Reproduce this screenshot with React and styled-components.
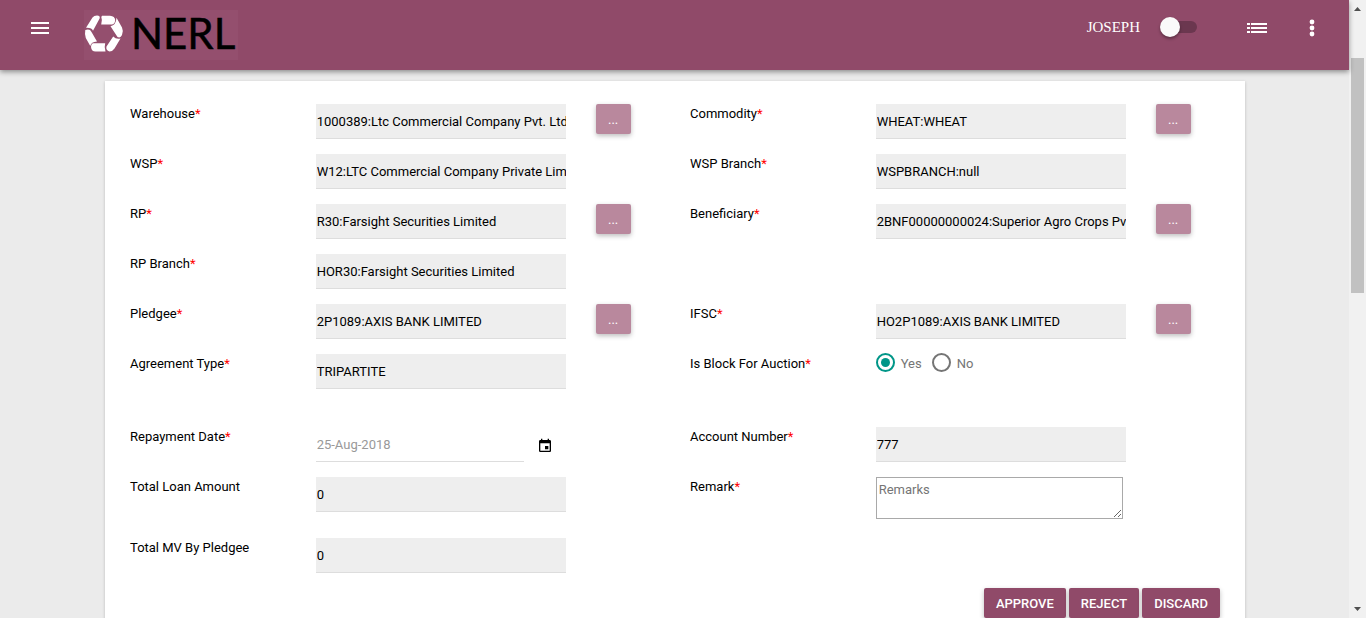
import React from "react";
import styled, { createGlobalStyle } from "styled-components";
import { MdEvent } from "react-icons/md";

const plum = "#904a69";
const teal = "#009688";

const GlobalStyle = createGlobalStyle`
  *, *::before, *::after { box-sizing: border-box; }
  body {
    margin: 0;
    background: #ebebeb;
    color: #000;
    font: 13px/20px Roboto, "Liberation Sans", sans-serif;
  }
  button, input, textarea { font: inherit; }
`;

const Shell = styled.div`
  display: flex;
  height: 100vh;
  overflow: hidden;
`;

const Page = styled.div`
  flex: 1;
  min-width: 0;
  display: flex;
  flex-direction: column;
`;

const Header = styled.header`
  position: relative;
  z-index: 1;
  flex: none;
  display: flex;
  align-items: flex-start;
  height: 70px;
  padding: 0 21px 0 24px;
  background: ${plum};
  box-shadow: 0 2px 5px rgba(0, 0, 0, 0.4);
`;

const IconButton = styled.button`
  display: grid;
  place-items: center;
  width: 32px;
  height: 56px;
  padding: 0;
  border: 0;
  background: none;
  color: #fff;
`;

const Logo = styled.a`
  display: flex;
  margin: 10px auto 0 28px;
  background: #944f6e;
`;

const Tools = styled.div`
  display: flex;
  align-items: center;
  height: 56px;
`;

const Menus = styled.div`
  display: flex;
  gap: 23px;
`;

const User = styled.span`
  margin: 0 20px 2px 0;
  color: #fff;
  font: 15px/20px "Liberation Serif", serif;
`;

const Toggle = styled.input`
  appearance: none;
  position: relative;
  width: 38px;
  height: 20px;
  margin: 0 43px 2px 0;
  &::before {
    content: "";
    position: absolute;
    inset: 4px 1px 4px 3px;
    border-radius: 6px;
    background: #6b374f;
  }
  &::after {
    content: "";
    position: absolute;
    top: 0;
    left: 0;
    width: 20px;
    height: 20px;
    border-radius: 50%;
    background: #fafafa;
    box-shadow: 0 2px 3px rgba(0, 0, 0, 0.35);
  }
`;

const Content = styled.main`
  flex: 1;
  display: flex;
  flex-direction: column;
  padding: 11px 104px 0 105px;
`;

const Card = styled.form`
  flex: 1 0 auto;
  padding: 23px 0 0;
  background: #fff;
  box-shadow: 0 1px 3px rgba(0, 0, 0, 0.2);
`;

const Fields = styled.div`
  display: grid;
  grid-template-columns: repeat(2, 2fr 3fr 1fr);
  align-items: start;
  row-gap: 15px;
  margin: 0 -4px 0 24px;
`;

const Label = styled.label`
  grid-column: ${(p) => (p.$side === "right" ? 4 : 1)};
  padding-left: 1px;
`;

const Required = styled.span`
  color: #f00;
`;

const TextField = styled.input`
  display: block;
  width: ${(p) => (p.$dated ? "208px" : "250px")};
  height: 35px;
  margin: 0;
  padding: 0 0 0 1px;
  border: 0;
  border-bottom: 1px solid #ddd;
  border-radius: 0;
  outline: 0;
  background: ${(p) => (p.$dated ? "transparent" : "#eee")};
  color: ${(p) => (p.$dated ? "#999" : "#000")};
`;

const DateBox = styled.div`
  display: flex;
  align-items: center;
  gap: 13px;
`;

const DateButton = styled.button`
  display: flex;
  padding: 3px 0 0;
  border: 0;
  background: none;
  color: #000;
`;

const LookupButton = styled.button`
  width: 35px;
  height: 30px;
  padding: 2px 0 0;
  border: 0;
  border-radius: 2px;
  background: #b9889d;
  color: #fff;
  box-shadow: 0 2px 5px rgba(0, 0, 0, 0.26);
`;

const RadioGroup = styled.div`
  display: flex;
  align-items: flex-start;
  gap: 10px;
  min-height: 58px;
`;

const RadioLabel = styled.label`
  display: flex;
  align-items: flex-start;
  gap: 6px;
  color: #757575;
`;

const Radio = styled.input`
  appearance: none;
  display: grid;
  place-items: center;
  width: 19px;
  height: 19px;
  margin: -1px 0 0;
  border: 2px solid #757575;
  border-radius: 50%;
  &:checked { border-color: ${teal}; }
  &:checked::before {
    content: "";
    width: 9px;
    height: 9px;
    border-radius: 50%;
    background: ${teal};
  }
`;

const Remarks = styled.textarea`
  display: block;
  width: 247px;
  height: 42px;
  margin: 0 0 4px;
  padding: 2px;
  border: 1px solid #a9a9a9;
  outline: 0;
  &::placeholder { color: #757575; }
`;

const Actions = styled.div`
  display: flex;
  justify-content: flex-end;
  gap: 3px;
  padding: 15px 25px;
`;

const ActionButton = styled.button`
  height: 30px;
  padding: 2px 12px 0;
  border: 0;
  border-radius: 2px;
  background: ${plum};
  color: #fff;
  font-weight: 500;
  box-shadow: 0 2px 5px rgba(0, 0, 0, 0.26);
`;

const ScrollRail = styled.div`
  flex: none;
  display: flex;
  flex-direction: column;
  align-items: center;
  width: 17px;
  background: #f1f1f1;
`;

const ScrollThumb = styled.div`
  width: 13px;
  height: 38vh;
  margin: 41px 0 auto;
  background: #c1c1c1;
`;

const fields = [
  { id: "warehouse", label: "Warehouse", value: "1000389:Ltc Commercial Company Pvt. Ltd", lookup: true },
  { id: "commodity", label: "Commodity", value: "WHEAT:WHEAT", lookup: true, side: "right" },
  { id: "wsp", label: "WSP", value: "W12:LTC Commercial Company Private Limited" },
  { id: "wspBranch", label: "WSP Branch", value: "WSPBRANCH:null", side: "right" },
  { id: "rp", label: "RP", value: "R30:Farsight Securities Limited", lookup: true },
  { id: "beneficiary", label: "Beneficiary", value: "2BNF00000000024:Superior Agro Crops Pvt Ltd", lookup: true, side: "right" },
  { id: "rpBranch", label: "RP Branch", value: "HOR30:Farsight Securities Limited" },
  { id: "pledgee", label: "Pledgee", value: "2P1089:AXIS BANK LIMITED", lookup: true },
  { id: "ifsc", label: "IFSC", value: "HO2P1089:AXIS BANK LIMITED", lookup: true, side: "right" },
  { id: "agreement", label: "Agreement Type", value: "TRIPARTITE" },
  { id: "auction", label: "Is Block For Auction", kind: "radio", side: "right" },
  { id: "repayment", label: "Repayment Date", value: "25-Aug-2018", kind: "date" },
  { id: "account", label: "Account Number", value: "777", side: "right" },
  { id: "loan", label: "Total Loan Amount", value: "0", optional: true },
  { id: "remark", label: "Remark", kind: "remarks", side: "right" },
  { id: "mv", label: "Total MV By Pledgee", value: "0", optional: true },
];

function Control({ field }) {
  if (field.kind === "radio") {
    return (
      <RadioGroup role="radiogroup" aria-labelledby={`${field.id}-label`}>
        <RadioLabel><Radio id={field.id} type="radio" name={field.id} defaultChecked />Yes</RadioLabel>
        <RadioLabel><Radio type="radio" name={field.id} />No</RadioLabel>
      </RadioGroup>
    );
  }
  if (field.kind === "date") {
    return (
      <DateBox>
        <TextField id={field.id} $dated readOnly defaultValue={field.value} />
        <DateButton type="button" aria-label="Choose date"><MdEvent size={16} /></DateButton>
      </DateBox>
    );
  }
  if (field.kind === "remarks") return <Remarks id={field.id} placeholder="Remarks" />;
  return <TextField id={field.id} readOnly defaultValue={field.value} />;
}

function Field({ field }) {
  return (
    <>
      <Label id={`${field.id}-label`} htmlFor={field.id} $side={field.side}>
        {field.label}
        {!field.optional && <Required>*</Required>}
      </Label>
      <Control field={field} />
      {field.lookup && <LookupButton type="button" aria-label={`Find ${field.label}`}>...</LookupButton>}
    </>
  );
}

function NerlLogo() {
  return (
    <svg width="154" height="50" viewBox="0 0 154 50" overflow="visible" role="img" aria-label="NERL">
      <g fill="#fff">
        <path d="M8.5 7.5Q10 5.5 13 5.5Q16.500 5.700 15.600 8.500L9 20.700Q8 17.500 2 17.800Z" />
        <path d="M18 5.700H26Q31 6.300 31.200 10Q31 14 28 14.500H17.200Q18.600 10 17.300 7Z" />
        <path d="M32.500 7.800L38 17.500Q39.700 21 38 25Q36.500 28.500 33.500 27L26.500 16.200Q32 15.500 32.500 7.800Z" />
        <path d="M29.200 26.500Q32 29.500 36.500 28.500L30.500 38.500Q28.500 41.500 25.500 41.500Q21.500 40 22.500 36.500Z" />
        <path d="M9.500 33.200H21.200Q20 37 21.500 41.500H11.500Q7.500 41.500 7 37Q7.200 33.500 9.500 33.200Z" />
        <path d="M1.300 20Q6 18.500 7.500 22L13 31.500Q7 31.800 6.300 36L1.800 28Q.5 24 1.300 20Z" />
      </g>
      <text x="47" y="39" fill="#000" stroke="#000" strokeWidth="0.5" fontFamily="Lato, 'Open Sans', sans-serif" fontSize="42">NERL</text>
    </svg>
  );
}

export default function App() {
  return (
    <>
      <GlobalStyle />
      <Shell>
        <Page>
          <Header>
            <IconButton type="button" aria-label="Menu">
              <svg width="18" height="12" fill="currentColor"><path d="M0 0h18v2H0zM0 5h18v2H0zM0 10h18v2H0z" /></svg>
            </IconButton>
            <Logo href="#"><NerlLogo /></Logo>
            <Tools>
              <User>JOSEPH</User>
              <Toggle type="checkbox" role="switch" aria-label="Theme" />
              <Menus>
                <IconButton type="button" aria-label="List">
                  <svg width="20" height="10" fill="currentColor">
                    <path d="M0 0h3v2H0zM4 0h16v2H4zM0 4h3v2H0zM4 4h16v2H4zM0 8h3v2H0zM4 8h16v2H4z" />
                  </svg>
                </IconButton>
                <IconButton type="button" aria-label="More">
                  <svg width="6" height="18" fill="currentColor">
                    <circle cx="3" cy="3" r="2.4" /><circle cx="3" cy="9" r="2.4" /><circle cx="3" cy="15" r="2.4" />
                  </svg>
                </IconButton>
              </Menus>
            </Tools>
          </Header>
          <Content>
            <Card>
              <Fields>
                {fields.map((field) => <Field key={field.id} field={field} />)}
              </Fields>
              <Actions>
                <ActionButton type="button">APPROVE</ActionButton>
                <ActionButton type="button">REJECT</ActionButton>
                <ActionButton type="button">DISCARD</ActionButton>
              </Actions>
            </Card>
          </Content>
        </Page>
        <ScrollRail aria-hidden="true">
          <svg width="17" height="17" fill="#505050"><path d="M5 11h7L8.500 7z" /></svg>
          <ScrollThumb />
          <svg width="17" height="17" fill="#505050"><path d="M5 6h7L8.500 10z" /></svg>
        </ScrollRail>
      </Shell>
    </>
  );
}
